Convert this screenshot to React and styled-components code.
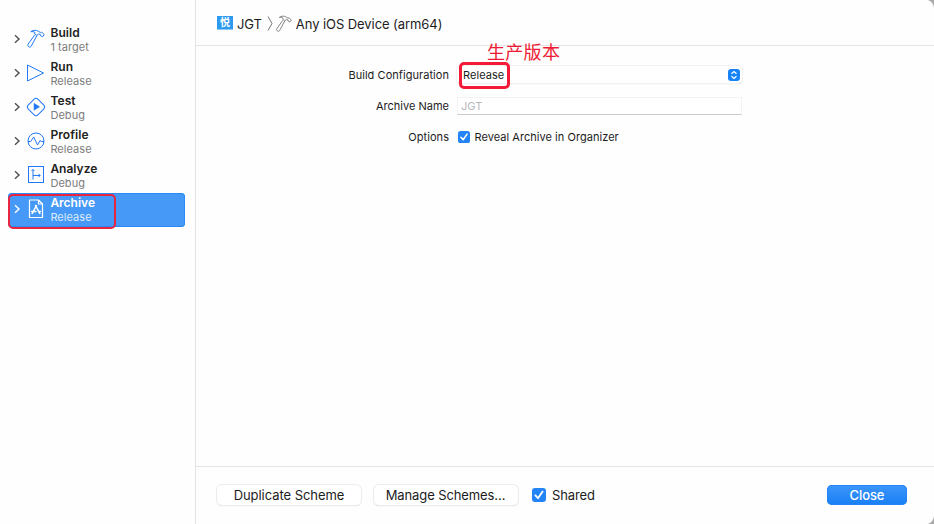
import React from "react";
import styled, { createGlobalStyle } from "styled-components";

const Global = createGlobalStyle`
  * { box-sizing: border-box; }
  body { margin: 0; background: #fff; overflow: hidden; }
`;

const Window = styled.div`
  display: flex;
  position: relative;
  width: 934px;
  height: 524px;
  background: #fefefe;
  color: #1c1c1c;
  font-family: Inter, "Noto Sans CJK SC", sans-serif;
`;

const Corner = styled.svg`
  position: absolute;
  right: 0;
  width: 6px;
  height: 8px;
  ${(p) => (p.$bottom ? "bottom: 0; transform: scaleY(-1);" : "top: 0;")}
`;

const Sidebar = styled.nav`
  width: 196px;
  padding: 23px 10px 0 8px;
  border-right: 1px solid #e4e4e4;
`;

const Row = styled.div`
  position: relative;
  display: flex;
  height: 34px;
  border-radius: 4px;
  padding-left: 5px;
  color: ${(p) => (p.$active ? "#fff" : "#222")};
  background: ${(p) => (p.$active ? "#4699f6" : "transparent")};
  box-shadow: ${(p) => (p.$active ? "inset 0 0 0 1px #2b8bf5" : "none")};
`;

const Disclosure = styled.svg`
  width: 8px;
  height: 10px;
  margin-top: 11px;
  color: ${(p) => (p.$active ? "#fff" : "#4f4f4f")};
`;

const ActionIcon = styled.svg`
  width: 20px;
  height: 20px;
  margin: 6px 0 0 5px;
  color: ${(p) => (p.$active ? "#fff" : "#2179f5")};
`;

const RowText = styled.div`
  margin: 1px 0 0 4.4px;
`;

const RowTitle = styled.div`
  font-size: 12px;
  line-height: 17px;
  font-weight: 600;
  letter-spacing: ${(p) => p.$track}px;
  white-space: nowrap;
`;

const RowSub = styled.div`
  font-size: 11px;
  line-height: 13px;
  letter-spacing: 0.05px;
  color: ${(p) => (p.$active ? "#dcebfd" : "#7d7d7d")};
`;

const Marker = styled.div`
  position: absolute;
  left: ${(p) => p.$x}px;
  top: ${(p) => p.$y}px;
  width: ${(p) => p.$w}px;
  height: ${(p) => p.$h}px;
  border: ${(p) => p.$line}px solid ${(p) => p.$color};
  border-radius: 5px;
`;

const Note = styled.div`
  position: absolute;
  left: 30px;
  top: -25px;
  font: 18px/20px "Noto Sans CJK SC", sans-serif;
  letter-spacing: 0.3px;
  color: #ee1b34;
  white-space: nowrap;
`;

const Main = styled.main`
  flex: 1;
  display: flex;
  flex-direction: column;
`;

const Header = styled.header`
  display: flex;
  align-items: center;
  height: 46px;
  padding: 2px 0 0 21px;
  border-bottom: 1px solid #e4e4e4;
  font-size: 13px;
`;

const AppLogo = styled.span`
  width: 16px;
  height: 15px;
  margin: -1px 4px 0 0;
  background: #2e9aef;
  color: #fff;
  font: 700 10px/12px "Noto Sans CJK SC", sans-serif;
  text-align: center;
  box-shadow: inset 0 -1px #fff, inset 0 -2px #8cc7f7;
`;

const Separator = styled.svg`
  width: 6px;
  height: 15px;
  margin-left: 5px;
  color: #777;
`;

const HeaderHammer = styled.svg`
  width: 18px;
  height: 18px;
  margin-left: 2px;
  color: #777;
`;

const Label = styled.span`
  letter-spacing: ${(p) => p.$track || 0}px;
  white-space: nowrap;
`;

const Target = styled(Label)`
  margin-left: 3px;
`;

const Form = styled.section`
  flex: 1;
  display: grid;
  grid-template-columns: 253px 285px;
  grid-template-rows: 31px 31px 31px;
  column-gap: 8px;
  padding-top: 13px;
  align-items: center;
  font-size: 11px;
`;

const FieldLabel = styled(Label)`
  text-align: right;
`;

const Popup = styled.div`
  position: relative;
  display: flex;
  align-items: center;
  justify-content: space-between;
  height: 17px;
  padding: 0 2px 0 6px;
  border-radius: 4px;
  background: #fff;
  box-shadow: 0 0 0 1px #f1f1f1, 0 1px 1px #bdbdbd;
`;

const Stepper = styled.svg`
  width: 12px;
  height: 12px;
`;

const Input = styled.div`
  height: 18px;
  padding: 0 3px;
  line-height: 17px;
  color: #b9b9b9;
  background: #fff;
  border: 1px solid #f2f2f2;
  border-bottom-color: #cacaca;
`;

const Option = styled.div`
  display: flex;
  align-items: center;
  padding-left: 1px;
  gap: ${(p) => p.$gap}px;
`;

const Check = styled.svg`
  width: ${(p) => p.$size}px;
  height: ${(p) => p.$size}px;
`;

const Footer = styled.footer`
  display: flex;
  align-items: center;
  height: 58px;
  padding: 0 27px 1px 21px;
  border-top: 1px solid #e4e4e4;
  font-size: 13px;
`;

const Button = styled.div`
  display: flex;
  align-items: center;
  justify-content: center;
  width: 144px;
  height: 20px;
  margin-right: 12.5px;
  border-radius: 5px;
  background: #fff;
  box-shadow: 0 0 0 1px #ececec, 0 1px 1px #c4c4c4;
`;

const Shared = styled(Option)`
  margin-left: 1px;
  flex: 1;
`;

const Primary = styled(Button)`
  width: 80px;
  margin: 0;
  color: #fff;
  font-weight: 500;
  background: linear-gradient(#3e96fa, #187ff7);
  box-shadow: inset 0 0 0 1px #2385f5;
`;

const Hammer = () => (
  <g fill="none" stroke="currentColor" strokeWidth="1" strokeLinejoin="round">
    <path d="M4.8 2.7C7 .9 10.3.8 12.5 2.4l2 1.1 1.2-.3 2.5 2.4-1.7 2.2-2-1.2-.2-1.3-2-.1-1.5 1.3-2.1-1.6.2-1.5C7.8 2.5 6.4 2.5 4.8 2.7z" />
    <path d="M8.7 6L2 15.2c-.7 1 .2 2.4 1.2 2.8 1 .3 1.7-.1 2.1-1L10.8 6.7" />
  </g>
);

const icons = {
  build: <Hammer />,
  run: <path d="M1.5 2L17.5 10L1.5 18Z" fill="none" stroke="currentColor" strokeLinejoin="round" />,
  test: (
    <g stroke="currentColor">
      <rect x="3.1" y="3.1" width="13.8" height="13.8" rx="3" fill="none" transform="rotate(45 10 10)" />
      <path d="M8 6.3L13.6 9.8L8 13.3Z" fill="currentColor" strokeWidth=".5" />
    </g>
  ),
  profile: (
    <g fill="none" stroke="currentColor" strokeLinejoin="round">
      <circle cx="10" cy="10" r="8" />
      <path d="M2 10.5h2.7L7.7 6l3.8 8 2.5-4.5 1.2 1H18" />
    </g>
  ),
  analyze: (
    <g fill="none" stroke="currentColor">
      <rect x="2.5" y="1.5" width="15" height="16" />
      <path d="M7 4.5v10M7 10.5h7M5.5 6L7 4.5L8.5 6M12.5 8.8l1.7 1.7-1.7 1.7" />
    </g>
  ),
  archive: (
    <g fill="none" stroke="currentColor" strokeWidth="1.2" strokeLinejoin="round">
      <path d="M3.5 1h9l4 4v13.5h-13zM12.5 1v4h4" />
      <path d="M10.7 6L6 15M9.3 6L14 15M5 12.5h5.5M12.3 12.5H15" strokeWidth="1.6" />
    </g>
  ),
};

const actions = [
  ["build", "Build", "1 target", 0.1],
  ["run", "Run", "Release", 0.1],
  ["test", "Test", "Debug", 0.1],
  ["profile", "Profile", "Release", 0.1],
  ["analyze", "Analyze", "Debug", 0],
  ["archive", "Archive", "Release", 0],
];

const Checkbox = ({ size }) => (
  <Check $size={size} viewBox="0 0 14 14">
    <rect width="14" height="14" rx="3" fill="#2384f7" />
    <path d="M3.4 7.3L6 10.2L10.6 3.6" fill="none" stroke="#fff" strokeWidth="1.8" strokeLinecap="round" strokeLinejoin="round" />
  </Check>
);

const WindowCorner = ({ bottom }) => (
  <Corner $bottom={bottom} viewBox="0 0 6 8">
    <path d="M0 0H6V8C5.5 4 3.5 1.5 0 0Z" fill="#aaa" />
  </Corner>
);

export default function App() {
  return (
    <>
      <Global />
      <Window>
        <Sidebar>
          {actions.map(([id, title, sub, track]) => {
            const active = id === "archive";
            return (
              <Row key={id} $active={active}>
                <Disclosure $active={active} viewBox="0 0 8 10">
                  <path d="M2 1.3L6 5L2 8.7" fill="none" stroke="currentColor" strokeWidth="1.4" />
                </Disclosure>
                <ActionIcon $active={active} viewBox="0 0 20 20">{icons[id]}</ActionIcon>
                <RowText>
                  <RowTitle $track={track}>{title}</RowTitle>
                  <RowSub $active={active}>{sub}</RowSub>
                </RowText>
                {active && <Marker $x={0} $y={1} $w={108} $h={35} $line={2} $color="#e8243f" />}
              </Row>
            );
          })}
        </Sidebar>
        <Main>
          <Header>
            <AppLogo>悦</AppLogo>
            <Label $track={-0.1}>JGT</Label>
            <Separator viewBox="0 0 6 15">
              <path d="M1 .5L5 7.5L1 14.5" fill="none" stroke="currentColor" />
            </Separator>
            <HeaderHammer viewBox="0 0 20 20"><Hammer /></HeaderHammer>
            <Target $track={-0.07}>Any iOS Device (arm64)</Target>
          </Header>
          <Form>
            <FieldLabel $track={0.05}>Build Configuration</FieldLabel>
            <Popup>
              <Label $track={0.05}>Release</Label>
              <Stepper viewBox="0 0 12 12">
                <rect width="12" height="12" rx="3" fill="#1683fa" />
                <path d="M3.5 4.7L6 2.5l2.5 2.2M3.5 7.3L6 9.5l2.5-2.2" fill="none" stroke="#fff" strokeWidth="1.3" />
              </Stepper>
              <Marker $x={2} $y={-4} $w={51} $h={27} $line={3} $color="#f31b38" />
              <Note>生产版本</Note>
            </Popup>
            <FieldLabel>Archive Name</FieldLabel>
            <Input>JGT</Input>
            <FieldLabel $track={0.05}>Options</FieldLabel>
            <Option $gap={4.5}>
              <Checkbox size={12} />
              <Label $track={0.04}>Reveal Archive in Organizer</Label>
            </Option>
          </Form>
          <Footer>
            <Button><Label $track={-0.05}>Duplicate Scheme</Label></Button>
            <Button><Label $track={-0.1}>Manage Schemes...</Label></Button>
            <Shared $gap={6}>
              <Checkbox size={14} />
              <Label $track={-0.1}>Shared</Label>
            </Shared>
            <Primary><Label $track={-0.1}>Close</Label></Primary>
          </Footer>
        </Main>
        <WindowCorner />
        <WindowCorner bottom />
      </Window>
    </>
  );
}
